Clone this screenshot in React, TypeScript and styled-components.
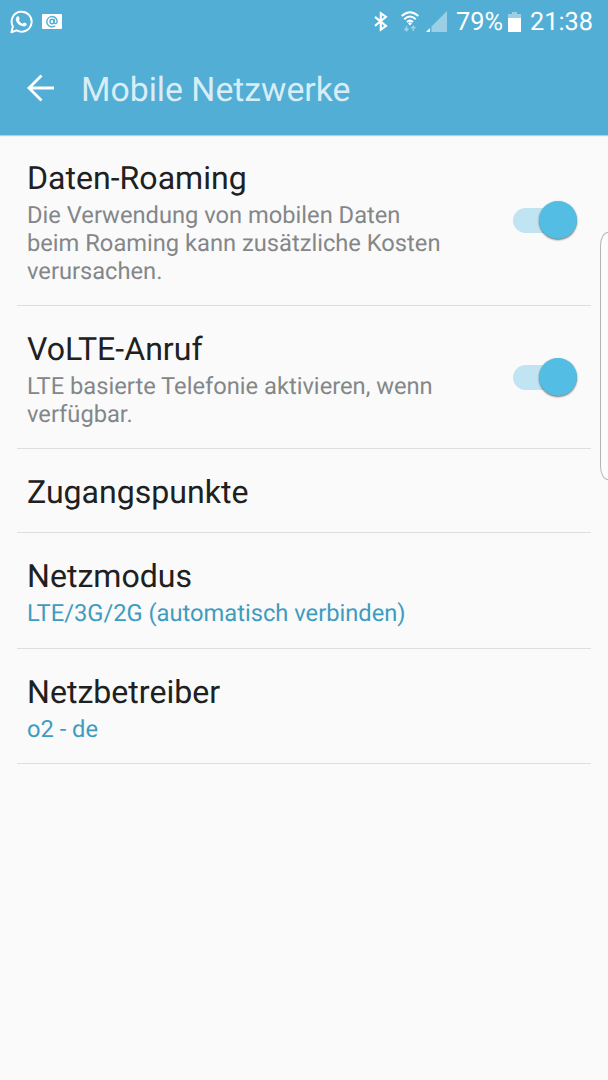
import React from "react";
import styled, { createGlobalStyle } from "styled-components";

const GlobalStyle = createGlobalStyle`
  * { box-sizing: border-box; }
  html, body { margin: 0; background: #fafafa; }
  body { font-family: Roboto, sans-serif; text-rendering: geometricPrecision; overflow: hidden; }
`;

const Screen = styled.div`
  position: relative;
  width: 608px;
  height: 1080px;
  background: #fafafa;
  overflow: hidden;
`;

const TopArea = styled.header`
  height: 135px;
  background: #52aed5;
  box-shadow: 0 1px 1px rgba(0, 0, 0, 0.2);
`;

const StatusBar = styled.div`
  display: flex;
  justify-content: space-between;
  height: 43px;
  padding: 0 16px 0 10px;
  color: #fff;
`;

const StatusGroup = styled.div`
  display: flex;
  align-items: center;
  height: 43px;
`;

const StatusText = styled.span<{ $width: number }>`
  width: ${(p) => p.$width}px;
  padding-top: 2px;
  font-size: 25.3px;
  line-height: 43px;
  white-space: nowrap;
`;

const Icon = styled.svg<{ $gap?: number }>`
  display: block;
  flex: none;
  margin-right: ${(p) => p.$gap ?? 0}px;
`;

const TitleBar = styled.div`
  display: flex;
  align-items: center;
  height: 92px;
  padding: 0 0 0 26px;
`;

const BackButton = styled.button`
  width: 55px;
  height: 40px;
  padding: 0;
  border: 0;
  background: none;
`;

const PageTitle = styled.h1`
  margin: 0;
  padding-top: 4px;
  font-size: 33.75px;
  font-weight: 400;
  line-height: 40px;
  color: #d8edf6;
`;

const List = styled.main`
  padding: 0 17px;
`;

const Row = styled.section<{ $height: number }>`
  display: flex;
  justify-content: space-between;
  height: ${(p) => p.$height}px;
  padding: 24px 14px 0 10px;
  border-bottom: 1px solid #dedede;
`;

const RowTitle = styled.h2`
  margin: 0;
  font-size: 32.1px;
  font-weight: 400;
  line-height: 38px;
  color: #202020;
`;

const Summary = styled.p<{ $accent?: boolean }>`
  margin: 4px 0 0;
  font-size: 23.7px;
  line-height: 28px;
  white-space: pre-line;
  color: ${(p) => (p.$accent ? "#3e9cc1" : "#838789")};
`;

const Track = styled.div<{ $top: number }>`
  display: flex;
  align-items: center;
  justify-content: flex-end;
  width: 64px;
  height: 25px;
  margin-top: ${(p) => p.$top}px;
  border-radius: 13px;
  background: #c0e4f1;
`;

const Thumb = styled.div`
  width: 38px;
  height: 38px;
  flex: none;
  margin-bottom: 1px;
  border-radius: 50%;
  background: #54bde3;
  box-shadow: 0 1px 2px rgba(0, 0, 0, 0.55);
`;

const EdgeHandle = styled.div`
  position: absolute;
  top: 232px;
  left: 600px;
  width: 16px;
  height: 248px;
  border: 1px solid #b4b4b4;
  border-radius: 8px / 14px;
  background: #fcfcfc;
`;

const items = [
  { title: "Daten-Roaming", summary: "Die Verwendung von mobilen Daten\nbeim Roaming kann zusätzliche Kosten\nverursachen.", height: 171, toggle: 49 },
  { title: "VoLTE-Anruf", summary: "LTE basierte Telefonie aktivieren, wenn\nverfügbar.", height: 143, toggle: 35 },
  { title: "Zugangspunkte", height: 84 },
  { title: "Netzmodus", summary: "LTE/3G/2G (automatisch verbinden)", height: 116 },
  { title: "Netzbetreiber", summary: "o2 - de", height: 115 },
];

export default function App() {
  return (
    <Screen>
      <GlobalStyle />
      <TopArea>
        <StatusBar>
          <StatusGroup>
            <Icon $gap={9} width="23" height="24" viewBox="0 0 23 24" fill="none" stroke="#fff">
              <path d="M1.4 22.2 2.9 16.6A10 10 0 1 1 6.7 20.4Z" strokeWidth="2" strokeLinejoin="round" />
              <path d="M7.2 6.5c.5-.5 1.2-.5 1.5 0l1 2.2c.2.5-.7 1.2-.8 1.6.8 1.7 2.2 2.8 3.8 3.5.5-.2 1-1.2 1.5-1.3l2.3 1.1c.5.3.2 1.6-.5 2.2-1.1.9-2.5.9-4 .3-3-1.1-5.2-3.2-6.1-5.7-.4-1.5.2-3.1 1.3-3.9Z" fill="#fff" stroke="none" />
            </Icon>
            <Icon width="20" height="15" viewBox="0 0 20 15">
              <rect width="20" height="15" rx="1" fill="#fff" />
              <g fill="none" stroke="#52aed5" strokeWidth="1.4">
                <path d="M13.2 11.8A5.2 5.2 0 1 1 15.2 7.6C15 10 12.2 10.2 12.1 8.5L12.4 5.2" />
                <ellipse cx="10" cy="7.5" rx="2" ry="2.3" />
              </g>
            </Icon>
          </StatusGroup>
          <StatusGroup>
            <Icon $gap={13} width="14" height="21" viewBox="0 0 14 21" fill="none" stroke="#fff" strokeWidth="2.1">
              <path d="M1 5.9 12 14.9 6.8 18.6V2.2L12 5.9 1 14.9" />
            </Icon>
            <Icon $gap={7} width="18" height="21" viewBox="0 0 18 21" fill="none" stroke="#fff" strokeWidth="2">
              <path d="M.7 5.1Q9-2.6 17.3 5.1M3.3 8.2Q9 2.8 14.7 8.2M6 11Q9 8.2 12 11" />
              <path d="m7 12.4 2-1.5 2 1.5-2 2Z" fill="#fff" stroke="none" />
              <path d="M5.5 15v4.5M3.5 17.6l2 2 2-2M12.3 20v-4.5M10.3 17.4l2-2 2 2" stroke="#9ed1e7" strokeWidth="1.5" />
            </Icon>
            <Icon $gap={9} width="21" height="21" viewBox="0 0 21 21">
              <path d="M21 0V21H5.5V15.5Z" fill="#9acfe6" />
              <path d="M4 17V21H0Z" fill="#fff" />
            </Icon>
            <StatusText $width={52}>79%</StatusText>
            <Icon $gap={9} width="13" height="20" viewBox="0 0 13 20">
              <path d="M4 0h5v2h4v5H0V2h4Z" fill="#9acfe6" />
              <path d="M0 6h13v14H0Z" fill="#fff" />
            </Icon>
            <StatusText $width={62}>21:38</StatusText>
          </StatusGroup>
        </StatusBar>
        <TitleBar>
          <BackButton aria-label="Zurück">
            <Icon width="28" height="38" viewBox="0 0 28 38" fill="none" stroke="#fff" strokeWidth="2.8">
              <path d="M28 18H3M15.5 5.5 3 18 15.5 30.5" />
            </Icon>
          </BackButton>
          <PageTitle>Mobile Netzwerke</PageTitle>
        </TitleBar>
      </TopArea>
      <List>
        {items.map((item) => (
          <Row key={item.title} $height={item.height}>
            <div>
              <RowTitle>{item.title}</RowTitle>
              {item.summary && <Summary $accent={!item.toggle}>{item.summary}</Summary>}
            </div>
            {item.toggle && (
              <Track $top={item.toggle} role="switch" aria-checked="true">
                <Thumb />
              </Track>
            )}
          </Row>
        ))}
      </List>
      <EdgeHandle />
    </Screen>
  );
}
